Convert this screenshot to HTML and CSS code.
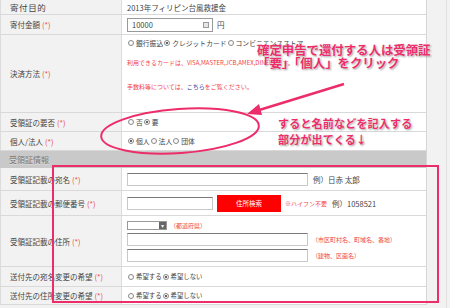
FILE: index.html
```html
<!DOCTYPE html>
<html lang="ja">
<head>
    <meta charset="UTF-8">
    <title>寄付フォーム</title>
    <link rel="stylesheet" href="styles.css">
</head>
<body>
<div class="page">
    <div class="form">
        <div class="row r-purpose">
            <div class="label big">寄付目的</div>
            <div class="value">2013年フィリピン台風救援金</div>
        </div>
        <div class="row r-amount">
            <div class="label">寄付金額<span class="req">(*)</span></div>
            <div class="value line">
                <span class="field amount">10000<span class="spin"></span></span>
                <span>円</span>
            </div>
        </div>
        <div class="row r-pay">
            <div class="label">決済方法 <span class="req">(*)</span></div>
            <div class="value top">
                <div class="radios">
                    <span class="radio"></span>銀行振込<span class="radio on"></span>クレジットカード<span class="radio"></span>コンビニエンスストア
                </div>
                <p class="note n1">利用できるカードは、VISA,MASTER,JCB,AMEX,DINERSです。</p>
                <p class="note n2">手数料等については、<a href="#">こちら</a>をご覧ください。</p>
            </div>
        </div>
        <div class="row r-small">
            <div class="label">受領証の要否 <span class="req">(*)</span></div>
            <div class="value radios"><span class="radio"></span>否<span class="radio on"></span>要</div>
        </div>
        <div class="row r-small">
            <div class="label">個人/法人 <span class="req">(*)</span></div>
            <div class="value radios"><span class="radio on"></span>個人<span class="radio"></span>法人<span class="radio"></span>団体</div>
        </div>
        <div class="section">受領証情報</div>
        <div class="row r-name">
            <div class="label">受領証記載の宛名 <span class="req">(*)</span></div>
            <div class="value line">
                <span class="field wide"></span>
                <span class="hint">例）日赤 太郎</span>
            </div>
        </div>
        <div class="row r-zip">
            <div class="label">受領証記載の郵便番号 <span class="req">(*)</span></div>
            <div class="value line">
                <span class="field zip"></span>
                <span class="btn">住所検索</span>
                <span class="note">※ハイフン不要</span>
                <span class="hint">例）1058521</span>
            </div>
        </div>
        <div class="row r-addr">
            <div class="label">受領証記載の住所 <span class="req">(*)</span></div>
            <div class="value stack">
                <div class="line pref"><span class="select"><span class="drop">&#9662;</span></span><span class="note">（都道府県）</span></div>
                <div class="line addr"><span class="field wide"></span><span class="note">（市区町村名、町域名、番地）</span></div>
                <div class="line addr"><span class="field wide"></span><span class="note">（建物、区画名）</span></div>
            </div>
        </div>
        <div class="row r-want">
            <div class="label">送付先の宛名変更の希望 <span class="req">(*)</span></div>
            <div class="value radios small"><span class="radio"></span>希望する<span class="radio on"></span>希望しない</div>
        </div>
        <div class="row r-want last">
            <div class="label">送付先の住所変更の希望 <span class="req">(*)</span></div>
            <div class="value radios small"><span class="radio"></span>希望する<span class="radio on"></span>希望しない</div>
        </div>
    </div>
    <div class="side"></div>

    <svg class="marks" width="450" height="308" viewBox="0 0 450 308">
        <ellipse cx="180" cy="131" rx="79" ry="22" transform="rotate(-4 180 131)" fill="none" stroke="#ec2d6a" stroke-width="2"/>
        <line x1="344" y1="84" x2="256" y2="111" stroke="#ec2d6a" stroke-width="2.5"/>
        <polygon points="247,114 259,104 262,115" fill="#ec2d6a"/>
        <rect x="53" y="166" width="385" height="136" fill="none" stroke="#ec2d6a" stroke-width="2"/>
    </svg>
    <div class="call c1">確定申告で還付する人は受領証<br>「要」「個人」をクリック</div>
    <div class="call c2">すると名前などを記入する<br>部分が出てくる↓</div>
</div>
</body>
</html>
```

FILE: styles.css
```css
* {
    margin: 0;
    padding: 0;
    box-sizing: border-box;
}

body {
    font-family: "Noto Sans CJK JP", "Liberation Sans", sans-serif;
    font-size: 7.5px;
    color: #444;
    background: #f2f2f2;
}

.page {
    position: relative;
    width: 450px;
    height: 308px;
    overflow: hidden;
    display: flex;
    align-items: flex-start;
}

.form {
    width: 427px;
    flex: none;
    background: #fff;
    border-right: 1px solid #d6d6d6;
}

.row {
    display: grid;
    grid-template-columns: 122px 1fr;
    border-bottom: 1px solid #d9d9d9;
}

.label {
    display: flex;
    align-items: center;
    background: #f2f2f2;
    padding-left: 9px;
    border-left: 1px solid #dcdcdc;
    border-right: 1px solid #dcdcdc;
    white-space: nowrap;
}

.label.big {
    font-size: 8.5px;
    letter-spacing: 0.6px;
}

.value {
    display: flex;
    align-items: center;
    padding-left: 5px;
    white-space: nowrap;
}

.value.top {
    display: block;
    padding-top: 3px;
}

.value.stack {
    flex-direction: column;
    align-items: flex-start;
    justify-content: center;
}

.req {
    color: #e84a4a;
    margin-left: 2px;
}

.r-purpose { height: 15px; }
.r-amount { height: 20px; }
.r-pay { height: 78px; }
.r-small { height: 19px; }
.r-name { height: 23px; }
.r-zip { height: 25px; }
.r-addr { height: 51px; }
.r-want { height: 20px; }
.r-want.last { height: 18px; }

.section {
    height: 17px;
    line-height: 17px;
    background: #c9c9c9;
    color: #777;
    font-size: 8px;
    padding-left: 9px;
    text-shadow: 0 1px 0 #e0e0e0;
}

.line {
    display: flex;
    align-items: center;
    gap: 4px;
}

.field {
    display: block;
    flex: none;
    height: 13px;
    border: 1px solid #c8c8c8;
    border-top-color: #7a7a7a;
    background: #fff;
}

.amount {
    width: 86px;
    height: 14px;
    border: 1px solid #999;
    padding: 0 3px 0 4px;
    display: flex;
    align-items: center;
    justify-content: space-between;
}

.spin {
    width: 6px;
    height: 6px;
    border: 1px solid #999;
    background: #e6e6e6;
}

.field.wide {
    width: 181px;
}

.field.zip {
    width: 86px;
}

.hint {
    margin-left: 1px;
}

.radios {
    font-size: 6.8px;
}

.radios.small {
    font-size: 6.4px;
}

.radio {
    display: inline-block;
    position: relative;
    width: 6px;
    height: 6px;
    border: 1px solid #8a8a8a;
    border-radius: 50%;
    background: #fafafa;
    margin: 0 2px 0 1px;
}

.radio.on::after {
    content: "";
    position: absolute;
    left: 1px;
    top: 1px;
    width: 2px;
    height: 2px;
    border-radius: 50%;
    background: #333;
}

.note {
    color: #f04545;
    font-size: 6px;
}

.n1 {
    margin-top: 10px;
}

.n2 {
    margin-top: 15px;
}

.note a {
    color: #3a3a9a;
    text-decoration: none;
}

.btn {
    flex: none;
    width: 64px;
    height: 17px;
    line-height: 17px;
    background: #f00;
    color: #fff;
    font-size: 6.5px;
    text-align: center;
}

.line.pref {
    height: 12px;
    gap: 3px;
}

.line.addr {
    height: 16px;
}

.select {
    display: flex;
    flex: none;
    justify-content: flex-end;
    width: 40px;
    height: 9px;
    border: 1px solid #999;
    background: #fff;
}

.drop {
    width: 7px;
    height: 7px;
    background: #666;
    color: #eee;
    font-size: 6px;
    line-height: 7px;
    text-align: center;
}

.side {
    width: 20px;
    height: 308px;
    border-right: 1px solid #e2e2e2;
}

.marks {
    position: absolute;
    left: 0;
    top: 0;
    pointer-events: none;
}

.call {
    position: absolute;
    color: #ec2d6a;
    font-weight: bold;
    white-space: nowrap;
    text-shadow: 0 0 2px #fff, 1px 1px 2px rgba(0, 0, 0, 0.45);
}

.c1 {
    left: 257px;
    top: 44px;
    font-size: 12.4px;
    line-height: 13px;
}

.c2 {
    left: 278px;
    top: 115px;
    font-size: 11px;
    line-height: 16px;
    letter-spacing: 0.2px;
}
```
